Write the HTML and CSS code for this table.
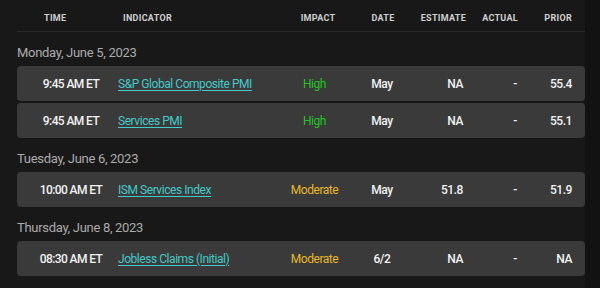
FILE: index.html
```html
<!DOCTYPE html>
<html>
  <head>
    <meta charset="utf-8">
    <title>Economic Calendar</title>
    <link rel="stylesheet" href="styles.css">
  </head>
  <body>
    <div id="calendar">
      <div class="cols head">
        <span class="c-time">Time</span>
        <span class="c-ind">Indicator</span>
        <span class="c-imp">Impact</span>
        <span class="c-date">Date</span>
        <span class="c-est">Estimate</span>
        <span class="c-act">Actual</span>
        <span class="c-prior">Prior</span>
      </div>

      <h3 class="day">Monday, June 5, 2023</h3>
      <div class="cols event">
        <span class="c-time">9:45 AM ET</span>
        <span class="c-ind"><a href="#">S&amp;P Global Composite PMI</a></span>
        <span class="c-imp high">High</span>
        <span class="c-date">May</span>
        <span class="c-est">NA</span>
        <span class="c-act">-</span>
        <span class="c-prior">55.4</span>
      </div>
      <div class="cols event">
        <span class="c-time">9:45 AM ET</span>
        <span class="c-ind"><a href="#">Services PMI</a></span>
        <span class="c-imp high">High</span>
        <span class="c-date">May</span>
        <span class="c-est">NA</span>
        <span class="c-act">-</span>
        <span class="c-prior">55.1</span>
      </div>

      <h3 class="day">Tuesday, June 6, 2023</h3>
      <div class="cols event">
        <span class="c-time">10:00 AM ET</span>
        <span class="c-ind"><a href="#">ISM Services Index</a></span>
        <span class="c-imp moderate">Moderate</span>
        <span class="c-date">May</span>
        <span class="c-est">51.8</span>
        <span class="c-act">-</span>
        <span class="c-prior">51.9</span>
      </div>

      <h3 class="day">Thursday, June 8, 2023</h3>
      <div class="cols event">
        <span class="c-time">08:30 AM ET</span>
        <span class="c-ind"><a href="#">Jobless Claims (Initial)</a></span>
        <span class="c-imp moderate">Moderate</span>
        <span class="c-date">6/2</span>
        <span class="c-est">NA</span>
        <span class="c-act">-</span>
        <span class="c-prior">NA</span>
      </div>
    </div>
  </body>
</html>
```

FILE: styles.css
```css
body {
  margin: 0;
  background: #121212;
  font-family: Roboto, "Liberation Sans", sans-serif;
}

#calendar {
  width: 568px;
  padding: 0 0 11px 17px;
  background: #181818;
  min-height: 277px;
}

.cols {
  display: grid;
  grid-template-columns: 101px 159px 75px 60px 51px 54px 55px;
  align-items: center;
}

.head {
  height: 32px;
  margin-bottom: 2px;
  padding-top: 4px;
  box-sizing: border-box;
  border-bottom: 1px solid #2b2b2b;
  font-size: 9px;
  font-weight: 700;
  letter-spacing: 0.3px;
  text-transform: uppercase;
  color: #cfcfcf;
}

.head .c-time { text-align: left; padding-left: 27px; }
.head .c-ind { padding-left: 5px; }
.head .c-imp { padding-left: 7px; }
.head .c-date { padding-left: 2px; }
.head .c-est { margin-right: -3px; }
.head .c-act { margin-right: -1px; }

.day {
  margin: 0;
  padding: 9px 0 3px;
  line-height: 20px;
  font-size: 13px;
  font-weight: 400;
  letter-spacing: -0.3px;
  color: #ababab;
}

.event {
  height: 35px;
  margin-bottom: 2px;
  background: #3a3a3a;
  border-radius: 4px;
  font-size: 12px;
  font-weight: 500;
  letter-spacing: -0.45px;
  color: #f2f2f2;
}

.c-time { text-align: center; padding-left: 7px; }
.event .c-time { letter-spacing: -0.6px; }
.c-imp, .c-date { text-align: center; }
.c-est, .c-act, .c-prior { text-align: right; }

.event .c-ind a {
  color: #45c9c9;
  font-weight: 400;
  text-decoration: underline;
  text-underline-offset: 2px;
}

.high { color: #25c325; font-weight: 400; }
.moderate { color: #e9b824; font-weight: 400; }
```
